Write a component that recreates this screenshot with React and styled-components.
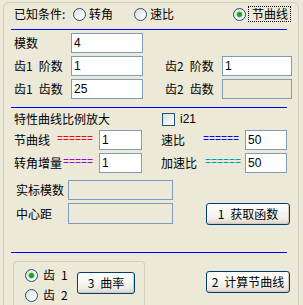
import React from "react";
import styled, { createGlobalStyle } from "styled-components";

const Global = createGlobalStyle`
  html, body { margin: 0; padding: 0; background: #ECE9D8; overflow: hidden; }
  body { font-family: "Noto Sans CJK SC", "Liberation Sans", sans-serif; font-size: 12px; color: #000; }
  * { box-sizing: border-box; }
`;

const Window = styled.div`
  width: 303px;
  height: 305px;
  padding-top: 2px;
  padding-left: 3px;
  background: #ECE9D8;
  overflow: hidden;
`;

const Group = styled.div`
  width: 296px;
  height: 303px;
  border: 1px solid #D0D0BF;
  border-bottom: none;
  border-radius: 6px 6px 0 0;
`;

const Content = styled.div`
  padding: 0 0 0 7px;
  display: flex;
  flex-direction: column;
`;

const HeaderRow = styled.div`
  margin-top: 2px;
  height: 18px;
  display: flex;
  align-items: center;
  padding-left: 3px;
  line-height: 14px;
`;

const HeaderLabel = styled.span`
  width: 59px;
  white-space: nowrap;
`;

const RadioOption = styled.label`
  display: flex;
  align-items: center;
  gap: ${(p) => p.$gap ?? 3}px;
  width: ${(p) => (p.$w ? `${p.$w}px` : "auto")};
  height: ${(p) => (p.$h ? `${p.$h}px` : "auto")};
  white-space: pre;
  line-height: 14px;
`;

const Radio = styled.span`
  flex: none;
  width: 13px;
  height: 13px;
  border-radius: 50%;
  border: 1px solid #1C5180;
  background: ${(p) =>
    p.$checked
      ? "radial-gradient(circle at 50% 50%, #21A121 0 2px, #62C862 2.6px, rgba(255,255,255,0) 3.4px), linear-gradient(135deg, #DCDCD7 0%, #F2F2EE 55%, #FFFFFF 100%)"
      : "linear-gradient(135deg, #DCDCD7 0%, #F2F2EE 55%, #FFFFFF 100%)"};
`;

const FocusLabel = styled.span`
  padding: 0 2px 0 3px;
  height: 16px;
  display: flex;
  align-items: center;
  border: 1px dotted #000;
`;

const Divider = styled.div`
  width: 276px;
  height: 1px;
  background: #0000FF;
  margin-top: ${(p) => p.$mt}px;
  flex: none;
`;

const ParamGrid = styled.div`
  margin-top: 3px;
  padding-left: 3px;
  display: grid;
  grid-template-columns: 57px 72px 22px 57px 70px;
  grid-auto-rows: 20px;
  row-gap: 3px;
  align-items: center;
  line-height: 14px;
`;

const Label = styled.span`
  white-space: pre;
  grid-column: ${(p) => p.$col ?? "auto"};
`;

const Input = styled.div`
  width: ${(p) => p.$w}px;
  height: ${(p) => p.$h ?? 20}px;
  border: 1px solid #7F9DB9;
  background: ${(p) => (p.$disabled ? "#ECE9D8" : "#FFFFFF")};
  padding-left: 2px;
  display: flex;
  align-items: center;
  font-family: "Liberation Sans", "Noto Sans CJK SC", sans-serif;
  font-size: 12px;
  grid-column: ${(p) => p.$col ?? "auto"};
  flex: none;
`;

const ScaleHeader = styled.div`
  margin-top: 2px;
  height: 18px;
  padding-left: 3px;
  display: flex;
  align-items: center;
  line-height: 14px;
`;

const ScaleTitle = styled.span`
  width: 148px;
  white-space: nowrap;
`;

const CheckOption = styled.label`
  display: flex;
  align-items: center;
  gap: 5px;
  font-family: "Liberation Sans", sans-serif;
`;

const Checkbox = styled.span`
  width: 13px;
  height: 13px;
  border: 1px solid #1C5180;
  background: linear-gradient(135deg, #DCDCD7 0%, #F2F2EE 55%, #FFFFFF 100%);
`;

const ScaleRow = styled.div`
  margin-top: ${(p) => p.$mt}px;
  height: 20px;
  padding-left: 3px;
  display: flex;
  align-items: center;
  line-height: 14px;
`;

const LabelCell = styled.div`
  width: ${(p) => p.$w}px;
  display: flex;
  align-items: center;
  justify-content: space-between;
  padding-right: ${(p) => p.$pr ?? 6}px;
  white-space: nowrap;
  flex: none;
`;

const Equals = styled.span`
  font-family: "Liberation Mono", monospace;
  font-size: 10px;
  color: ${(p) => p.$color};
`;

const Spacer = styled.div`
  width: ${(p) => p.$w}px;
  flex: none;
`;

const ResultRow = styled.div`
  margin-top: ${(p) => p.$mt}px;
  height: ${(p) => p.$h}px;
  padding-left: 5px;
  display: flex;
  align-items: flex-start;
  line-height: 14px;
`;

const ResultLabel = styled.span`
  width: 52px;
  height: ${(p) => p.$h}px;
  display: flex;
  align-items: center;
  white-space: nowrap;
  flex: none;
`;

const Button = styled.button`
  width: ${(p) => p.$w}px;
  height: 22px;
  margin: ${(p) => p.$m ?? "0"};
  padding: 0;
  flex: none;
  border: 1px solid #003C74;
  border-radius: 3px;
  background: linear-gradient(180deg, #FFFFFF 0%, #F8F8F4 40%, #EEEDE7 75%, #D8D3C7 100%);
  box-shadow: inset -1px -1px 0 #D0CBBE, inset 1px 1px 0 #FFFFFF;
  font-family: "Noto Sans CJK SC", sans-serif;
  font-size: 12px;
  line-height: 14px;
  color: #000;
  display: flex;
  align-items: center;
  justify-content: center;
  white-space: pre;
`;

const BottomRow = styled.div`
  margin-top: 8px;
  display: flex;
  align-items: flex-start;
`;

const GroupBox = styled.div`
  margin-left: 2px;
  width: 132px;
  height: 44px;
  border: 1px solid #D0D0BF;
  border-bottom: none;
  border-radius: 4px 4px 0 0;
  padding: 3px 0 0 11px;
  display: flex;
  align-items: flex-start;
`;

const RadioColumn = styled.div`
  width: 52px;
  display: flex;
  flex-direction: column;
  flex: none;
`;

export default function App() {
  return (
    <>
      <Global />
      <Window>
        <Group>
          <Content>
            <HeaderRow>
              <HeaderLabel>已知条件:</HeaderLabel>
              <RadioOption $w={61}>
                <Radio />
                <span>转角</span>
              </RadioOption>
              <RadioOption $w={99}>
                <Radio />
                <span>速比</span>
              </RadioOption>
              <RadioOption $gap={2}>
                <Radio $checked />
                <FocusLabel>节曲线</FocusLabel>
              </RadioOption>
            </HeaderRow>
            <Divider $mt={6} />
            <ParamGrid>
              <Label>模数</Label>
              <Input $w={72}>4</Input>
              <Label $col="1">{"齿1\u2002阶数"}</Label>
              <Input $w={72}>1</Input>
              <span />
              <Label>{"齿2\u2002阶数"}</Label>
              <Input $w={70}>1</Input>
              <Label $col="1">{"齿1\u2002齿数"}</Label>
              <Input $w={72}>25</Input>
              <span />
              <Label>{"齿2\u2002齿数"}</Label>
              <Input $w={70} $disabled />
            </ParamGrid>
            <Divider $mt={8} />
            <ScaleHeader>
              <ScaleTitle>特性曲线比例放大</ScaleTitle>
              <CheckOption>
                <Checkbox />
                <span>i21</span>
              </CheckOption>
            </ScaleHeader>
            <ScaleRow $mt={2}>
              <LabelCell $w={85} $pr={6}>
                <span>节曲线</span>
                <Equals $color="#FF0000">======</Equals>
              </LabelCell>
              <Input $w={43}>1</Input>
              <Spacer $w={19} />
              <LabelCell $w={84} $pr={6}>
                <span>速比</span>
                <Equals $color="#0000FF">======</Equals>
              </LabelCell>
              <Input $w={42}>50</Input>
            </ScaleRow>
            <ScaleRow $mt={3}>
              <LabelCell $w={85} $pr={6}>
                <span>转角增量</span>
                <Equals $color="#A000E8">=====</Equals>
              </LabelCell>
              <Input $w={43}>1</Input>
              <Spacer $w={19} />
              <LabelCell $w={84} $pr={4}>
                <span>加速比</span>
                <Equals $color="#00A0A0">======</Equals>
              </LabelCell>
              <Input $w={42}>50</Input>
            </ScaleRow>
            <ResultRow $mt={7} $h={20}>
              <ResultLabel $h={20}>实标模数</ResultLabel>
              <Input $w={105} $disabled />
            </ResultRow>
            <ResultRow $mt={3} $h={22}>
              <ResultLabel $h={21}>中心距</ResultLabel>
              <Input $w={105} $h={21} $disabled />
              <Spacer $w={33} />
              <Button $w={84}>{"1\u2002获取函数"}</Button>
            </ResultRow>
            <Divider $mt={27} />
            <BottomRow>
              <GroupBox>
                <RadioColumn>
                  <RadioOption $h={20} $gap={5}>
                    <Radio $checked />
                    <span>{"齿\u20021"}</span>
                  </RadioOption>
                  <RadioOption $h={20} $gap={5}>
                    <Radio />
                    <span>{"齿\u20022"}</span>
                  </RadioOption>
                </RadioColumn>
                <Button $w={58} $m="7px 0 0 0">{"3\u2002曲率"}</Button>
              </GroupBox>
              <Button $w={84} $m="10px 0 0 61px">{"2\u2002计算节曲线"}</Button>
            </BottomRow>
          </Content>
        </Group>
      </Window>
    </>
  );
}
